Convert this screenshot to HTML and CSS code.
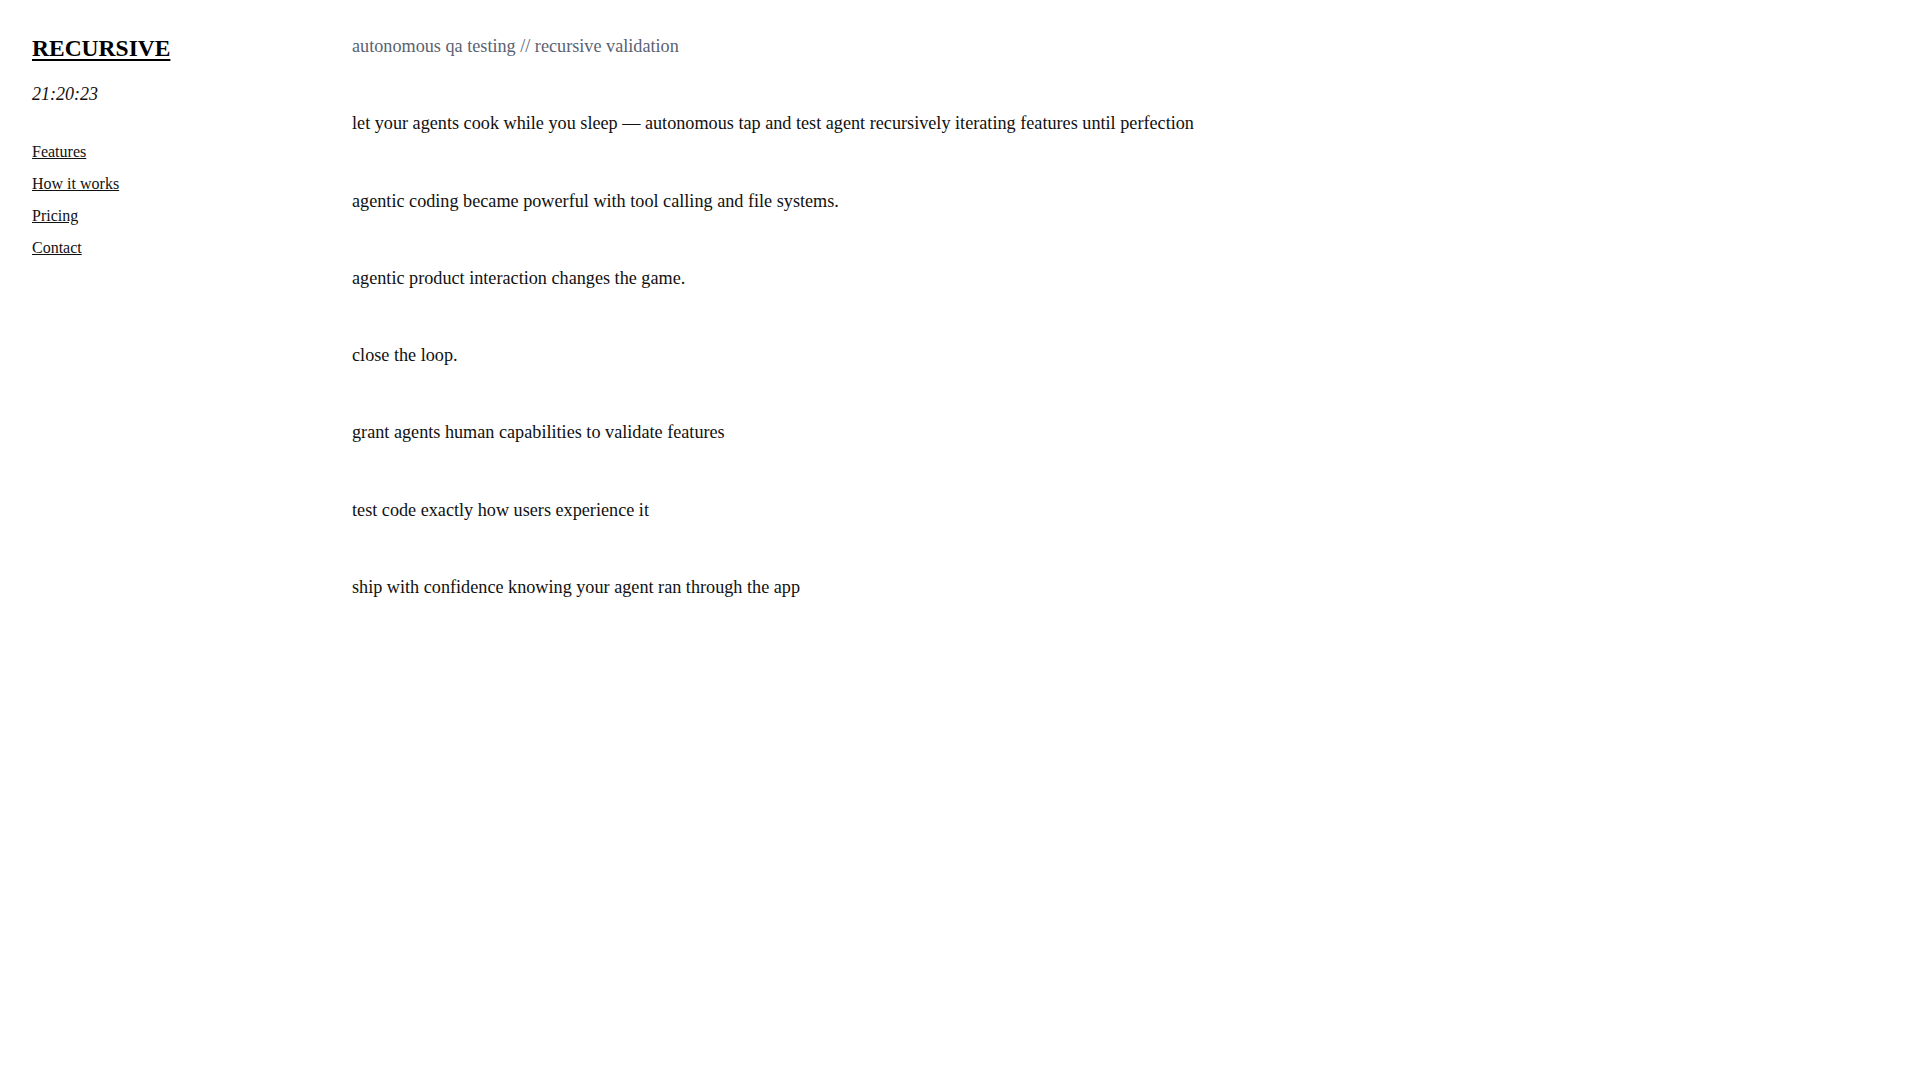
FILE: index.html
```html
<!DOCTYPE html>
<html lang="en">
<head>
<meta charset="utf-8">
<title>RECURSIVE</title>
<link rel="stylesheet" href="styles.css">
</head>
<body>
<div class="layout">
  <aside class="sidebar">
    <h1 class="brand"><a href="#">RECURSIVE</a></h1>
    <div class="clock">21:20:23</div>
    <nav class="nav">
      <a href="#features">Features</a>
      <a href="#how">How it works</a>
      <a href="#pricing">Pricing</a>
      <a href="#contact">Contact</a>
    </nav>
  </aside>
  <main class="content">
    <p class="tagline">autonomous qa testing // recursive validation</p>
    <p class="line">let your agents cook while you sleep — autonomous tap and test agent recursively iterating features until perfection</p>
    <p class="line">agentic coding became powerful with tool calling and file systems.</p>
    <p class="line">agentic product interaction changes the game.</p>
    <p class="line">close the loop.</p>
    <p class="line">grant agents human capabilities to validate features</p>
    <p class="line">test code exactly how users experience it</p>
    <p class="line">ship with confidence knowing your agent ran through the app</p>
  </main>
</div>
</body>
</html>
```

FILE: styles.css
```css
html, body {
  margin: 0;
  padding: 0;
  background: #ffffff;
}

body {
  font-family: "Liberation Serif", "Times New Roman", serif;
  color: #111111;
}

.layout {
  display: grid;
  grid-template-columns: 320px 1fr;
  min-height: 100vh;
}

.sidebar {
  padding: 32px;
  display: flex;
  flex-direction: column;
}

.brand {
  margin: 0;
  font-size: 23.5px;
  line-height: 32px;
  font-weight: 700;
}

.brand a {
  color: #000000;
  text-decoration: underline;
  text-decoration-thickness: 2px;
  text-underline-offset: 3px;
}

.clock {
  margin-top: 17px;
  font-size: 18px;
  line-height: 27px;
  font-style: italic;
  color: #111111;
}

.nav {
  margin-top: 28px;
  display: flex;
  flex-direction: column;
}

.nav a {
  font-size: 16px;
  line-height: 32px;
  color: #111111;
  text-decoration: underline;
}

.content {
  padding: 32px;
}

.content p {
  margin: 0 0 48px 0;
  font-size: 18.2px;
  line-height: 29.25px;
}

.tagline {
  color: #5a6272;
}
```
